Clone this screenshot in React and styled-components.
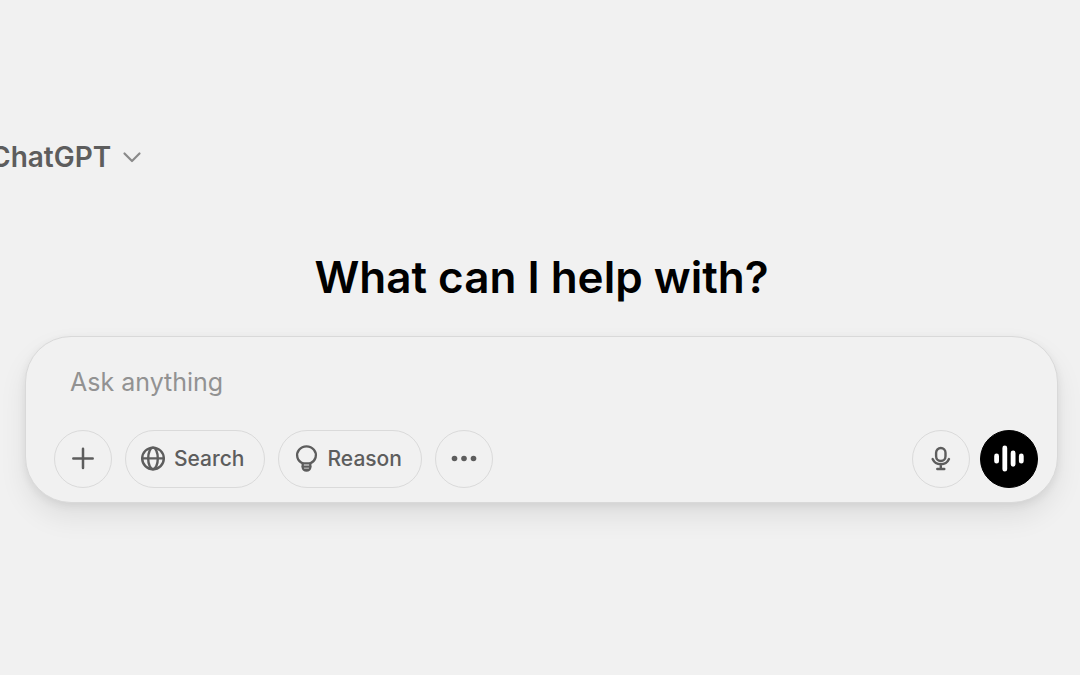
import { useState } from 'react';
import styled, { createGlobalStyle } from 'styled-components';

const App = () => {
  const [prompt, setPrompt] = useState('');

  const handleSubmit = (e) => {
    e.preventDefault();
    setPrompt('');
  };

  return (
    <>
      <GlobalStyle />
      <Layout>
        <Header>
          <ModelButton type="button">
            ChatGPT
            <ChevronIcon />
          </ModelButton>
        </Header>
        <Main>
          <Title>What can I help with?</Title>
          <Composer onSubmit={handleSubmit}>
            <PromptInput
              type="text"
              aria-label="Ask anything"
              placeholder="Ask anything"
              value={prompt}
              onChange={(e) => setPrompt(e.target.value)}
            />
            <Toolbar>
              <ToolGroup $gap="13px">
                <RoundButton type="button" aria-label="Add">
                  <PlusIcon />
                </RoundButton>
                <PillButton type="button">
                  <GlobeIcon />
                  Search
                </PillButton>
                <PillButton type="button">
                  <BulbIcon />
                  Reason
                </PillButton>
                <RoundButton type="button" aria-label="More">
                  <DotsIcon />
                </RoundButton>
              </ToolGroup>
              <ToolGroup $gap="10px">
                <RoundButton type="button" aria-label="Dictate">
                  <MicIcon />
                </RoundButton>
                <RoundButton type="button" aria-label="Voice mode" $dark>
                  <VoiceIcon />
                </RoundButton>
              </ToolGroup>
            </Toolbar>
          </Composer>
        </Main>
      </Layout>
    </>
  );
};
export default App;

const ChevronIcon = () => (
  <Icon width="20" height="20" viewBox="0 0 20 20" stroke="#8a8a8a" strokeWidth="2.2">
    <path d="M2.5 6.5 10 14l7.5-7.5" />
  </Icon>
);

const PlusIcon = () => (
  <Icon width="26" height="26" viewBox="0 0 26 26" strokeWidth="2.5">
    <path d="M13 2.7v19.4M3.3 12.4h19.4" />
  </Icon>
);

const GlobeIcon = () => (
  <Icon width="24" height="26" viewBox="0 0 24 26" strokeWidth="2.4">
    <circle cx="12" cy="12.4" r="10.8" />
    <ellipse cx="12" cy="12.4" rx="4.8" ry="10.8" />
    <path d="M1.2 12.4h21.6" />
  </Icon>
);

const BulbIcon = () => (
  <Icon width="25" height="28" viewBox="0 0 25 28" strokeWidth="2.3">
    <path d="M8.7 18.3a9.4 8.8 0 1 1 7.6 0" />
    <path d="M8.7 18.3h7.6v3.6a3.8 3.8 0 0 1-7.6 0z" />
    <path d="M8.7 21.7h7.6M10.8 24.6h3.4" />
  </Icon>
);

const DotsIcon = () => (
  <Icon width="26" height="26" viewBox="0 0 26 26">
    <g fill="currentColor" stroke="none">
      <circle cx="3.5" cy="12.5" r="2.8" />
      <circle cx="13" cy="12.5" r="2.8" />
      <circle cx="22.5" cy="12.5" r="2.8" />
    </g>
  </Icon>
);

const MicIcon = () => (
  <Icon width="26" height="26" viewBox="0 0 26 26" strokeWidth="2.4">
    <rect x="8.1" y="2" width="9.4" height="13" rx="4.7" />
    <path d="M4.6 13a9 9 0 0 0 16.4 0M12.8 18.4v4.6M9.3 23h7" />
  </Icon>
);

const VoiceIcon = () => (
  <Icon width="30" height="30" viewBox="0 0 30 30" strokeWidth="4.8">
    <path d="M2.6 12v5.2M10.8 4v21.2M19.1 8.9v11.4M27.3 12v5.2" />
  </Icon>
);

const GlobalStyle = createGlobalStyle`
  * {
    box-sizing: border-box;
  }
  body {
    margin: 0;
    background-color: #f1f1f1;
    font-family: Inter, 'Liberation Sans', sans-serif;
  }
  button,
  input {
    font-family: inherit;
  }
`;

const Layout = styled.div`
  display: flex;
  flex-direction: column;
  min-height: 100vh;
  padding-top: 136px;
  overflow: hidden;
`;

const Header = styled.header`
  display: flex;
  margin-left: -10px;
`;

const ModelButton = styled.button`
  display: flex;
  align-items: center;
  gap: 11px;
  height: 42px;
  padding: 0;
  border: none;
  background: none;
  color: #5d5d5d;
  font-size: 28px;
  font-weight: 600;
  cursor: pointer;
`;

const Main = styled.main`
  display: flex;
  flex-direction: column;
  padding: 71px 22px 0 25px;
`;

const Title = styled.h1`
  margin: 0 0 31px;
  color: #000;
  font-size: 44px;
  font-weight: 600;
  line-height: 56px;
  text-align: center;
`;

const Composer = styled.form`
  display: flex;
  flex-direction: column;
  gap: 22px;
  padding: 19px 19px 14px 28px;
  border: 1px solid #d9d9d9;
  border-radius: 46px;
  background-color: #f1f1f1;
  box-shadow: 0 14px 28px rgba(0, 0, 0, 0.08), 0 3px 8px rgba(0, 0, 0, 0.07);
`;

const PromptInput = styled.input`
  width: 100%;
  height: 52px;
  padding: 0 16px;
  border: none;
  outline: none;
  background: none;
  color: #0d0d0d;
  font-size: 25px;
  &::placeholder {
    color: #929292;
    opacity: 1;
  }
`;

const Toolbar = styled.div`
  display: flex;
  justify-content: space-between;
`;

const ToolGroup = styled.div`
  display: flex;
  gap: ${(props) => props.$gap};
`;

const RoundButton = styled.button`
  display: flex;
  justify-content: center;
  align-items: center;
  width: 58px;
  height: 58px;
  padding: 0;
  border: 1px solid ${(props) => (props.$dark ? '#000' : '#dadada')};
  border-radius: 50%;
  background-color: ${(props) => (props.$dark ? '#000' : 'transparent')};
  color: ${(props) => (props.$dark ? '#fff' : '#5d5d5d')};
  cursor: pointer;
`;

const PillButton = styled.button`
  display: flex;
  align-items: center;
  gap: 9px;
  height: 58px;
  padding: 0 19px 1px 15px;
  border: 1px solid #dadada;
  border-radius: 29px;
  background: none;
  color: #5d5d5d;
  font-size: 21px;
  font-weight: 500;
  cursor: pointer;
`;

const Icon = styled.svg.attrs({ 'aria-hidden': true })`
  flex-shrink: 0;
  fill: none;
  stroke: ${(props) => props.stroke || 'currentColor'};
  stroke-linecap: round;
  stroke-linejoin: round;
`;
